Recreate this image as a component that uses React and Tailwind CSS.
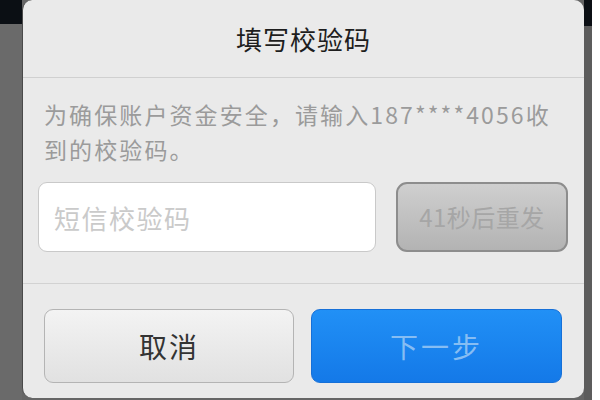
import React from 'react'

function App() {
    const cjk = { fontFamily: '"Noto Sans CJK SC", "Noto Sans", sans-serif' }
    return (
        <div className="w-[600px] h-[400px] flex bg-[#666666] overflow-hidden" style={cjk}>
            {/* backdrop, left */}
            <div className="w-[22px] flex flex-col">
                <div className="h-[24px] bg-[#0b0f14]" />
                <div className="flex-1 bg-[#6a6a6a]" />
            </div>

            {/* ================= DIALOG ================= */}
            <div className="w-[562px] h-[398px] flex flex-col bg-[#eaeaea] rounded-[10px] border-l border-[#4a4a4a]">
                <div className="h-[78px] flex items-center justify-center border-b border-[#d0d0d0]">
                    <span className="text-[26px] text-[#1e1e1e] tracking-[1px]">填写校验码</span>
                </div>

                <div className="px-[15px] pt-[19px] pb-[31px] border-b border-[#d2d2d2]">
                    <p className="pl-[6px] text-[23px] leading-[35px] text-[#9b9b9b] tracking-[2.1px]">
                        为确保账户资金安全，请输入187****4056收<br />到的校验码。
                    </p>
                    <div className="mt-[15px] flex gap-[20px]">
                        <div className="w-[338px] h-[70px] bg-white rounded-[9px] border border-[#c9c9c9] flex items-center pl-[15px]">
                            <span className="text-[26px] text-[#cacaca] tracking-[1.5px]">短信校验码</span>
                        </div>
                        <div className="w-[172px] h-[70px] rounded-[11px] border-2 border-[#8d8d8d] bg-gradient-to-b from-[#cfcfcf] to-[#b3b3b3] flex items-center justify-center">
                            <span className="text-[24px] text-[#a6a6a6] tracking-[0.5px]">41秒后重发</span>
                        </div>
                    </div>
                </div>

                <div className="flex gap-[17px] pl-[21px] pt-[25px]">
                    <div className="w-[250px] h-[74px] rounded-[9px] border border-[#b4b4b4] bg-gradient-to-b from-[#f3f3f3] to-[#e1e1e1] flex items-center justify-center">
                        <span className="text-[28px] text-[#333333] tracking-[2px]">取消</span>
                    </div>
                    <div className="w-[251px] h-[74px] rounded-[9px] border border-[#1670d8] bg-gradient-to-b from-[#2190f6] to-[#1479e8] flex items-center justify-center">
                        <span className="text-[28px] text-[#86bdf3] tracking-[3px]">下一步</span>
                    </div>
                </div>
            </div>

            {/* backdrop, right */}
            <div className="w-[8px] flex flex-col">
                <div className="h-[26px] bg-[#0b0f14]" />
                <div className="flex-1 bg-[#5c5c5c]" />
            </div>
            <div className="flex-1 bg-white" />
        </div>
    )
}

export default App
